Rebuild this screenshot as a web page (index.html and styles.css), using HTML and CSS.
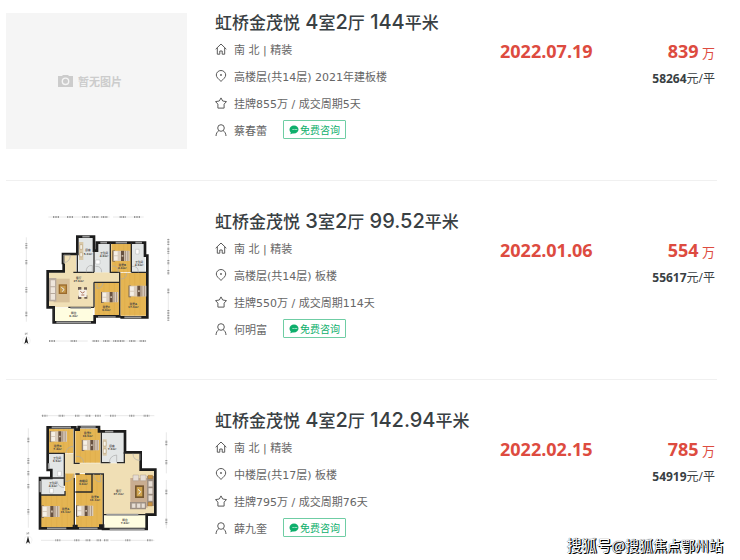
FILE: index.html
```html
<!DOCTYPE html>
<html lang="zh-CN">
<head>
  <meta charset="UTF-8">
  <meta name="viewport" content="width=device-width, initial-scale=1.0">
  <title>虹桥金茂悦 成交记录</title>
  <link rel="stylesheet" href="styles.css">
</head>
<body>
  <!-- Shared icons and furniture -->
  <svg class="sprite" width="0" height="0" aria-hidden="true">
    <symbol id="icon-home" viewBox="0 0 12 12">
      <path d="M.7 6.200 6 1l5.300 5.200M2.300 5v6.200h2.500V8h2.400v3.200h2.500V5"/>
    </symbol>
    <symbol id="icon-pin" viewBox="0 0 12 12">
      <path d="M6 11.400C3.500 9 1.300 7.300 1.300 5a4.700 4.500 0 0 1 9.400 0c0 2.300-2.200 4-4.700 6.400z"/>
      <circle cx="6" cy="5" r=".6"/>
    </symbol>
    <symbol id="icon-star" viewBox="0 0 12 12">
      <path d="M6 .9l1.700 3.100 3.800.6-2.400 2.500v4H2.900v-4L.5 4.600 4.300 4z"/>
    </symbol>
    <symbol id="icon-user" viewBox="0 0 12 12">
      <circle cx="6" cy="4" r="3.300"/>
      <path d="M1 12c.2-2.800 1.200-4.300 2.800-5.300M11 12c-.2-2.800-1.200-4.300-2.800-5.300"/>
    </symbol>
    <symbol id="icon-chat" viewBox="0 0 10 10">
      <path d="M5 .5C2.400.5.500 2.200.500 4.500c0 1.200.5 2.200 1.300 2.900L1.300 9.300l2.200-.9C7 9 9.500 7 9.500 4.500 9.500 2.200 7.600.500 5 .5z" fill="#0eaf6c"/>
      <path d="M3.500 4.500h1.200M5.500 4.500h1.200M7.300 4.500h.9" stroke="#fff" stroke-width=".8"/>
    </symbol>
    <symbol id="bed" viewBox="0 0 54 34">
      <path d="M0 0h8v34H0z" fill="#6d5b4c"/>
      <path d="M3 1h49v31H3z" fill="#d9cbbb"/>
      <path d="M5 3h11v12H5zM5 18h11v12H5z" fill="#f5efe6"/>
      <path d="M26 1h9v31h-9z" fill="#66503f"/>
      <path d="M37 1h4v31h-4zM45 1h3v31h-3z" fill="#ad9986"/>
      <path d="M28 14h5v5h-5z" fill="#c9b9a7"/>
    </symbol>
    <symbol id="compass" viewBox="0 0 28 40">
      <path d="M10 1v6l5-6v6" fill="none" stroke="#777" stroke-width="1.500"/>
      <circle cx="13" cy="25" r="12" fill="none" stroke="#ddd"/>
      <path d="M13 12l6 23-6-5-6 5z" fill="#222"/>
    </symbol>
  </svg>

  <main>
    <article class="deal">
      <a class="cover empty" href="#">
        <svg class="camera" viewBox="0 0 15 12" aria-hidden="true">
          <path d="M0 1h4l1-1h5l1 1h4v11H0z" fill="#ccc"/>
          <circle cx="7.500" cy="6.300" r="3.200" fill="none" stroke="#f5f5f5" stroke-width="1.400"/>
        </svg>
        <span>暂无图片</span>
      </a>
      <div class="info">
        <h2><a href="#">虹桥金茂悦<b> 4</b>室<b>2</b>厅<b> 144</b>平米</a></h2>
        <ul>
          <li><svg class="icon"><use href="#icon-home"/></svg>南 北 | 精装</li>
          <li><svg class="icon"><use href="#icon-pin"/></svg>高楼层(共14层) 2021年建板楼</li>
          <li><svg class="icon"><use href="#icon-star"/></svg>挂牌855万 / 成交周期5天</li>
          <li><svg class="icon"><use href="#icon-user"/></svg><a href="#">蔡春蕾</a><button type="button"><svg class="chat"><use href="#icon-chat"/></svg>免费咨询</button></li>
        </ul>
      </div>
      <time class="date" datetime="2022-07-19">2022.07.19</time>
      <div class="price">
        <p class="total"><strong>839</strong> 万</p>
        <p class="unit"><strong>58264</strong>元/平</p>
      </div>
    </article>

    <article class="deal">
      <a class="cover" href="#" aria-label="户型图">
        <svg class="plan" viewBox="-12 21 540 408">
          <!-- dimension lines -->
          <g class="dims">
            <path d="M112 36H296M306 36H398M46 97V350M472 100V210M472 250V348M114 408H230M242 408H406"/>
            <path class="ticks" d="M126 36H146M168 36H188M214 36H234M244 36H262M271 36H290M326 36H345M369 36H388M46 115V131M46 165V180M46 247V263M46 320V336M472 102V120M472 128V146M472 165V179M472 195V208M472 251V267M472 315V347M114 408H134M179 408H198M245 408H265M277 408H296M307 408H341M355 408H374M386 408H405"/>
          </g>
          <!-- floors -->
          <path d="M156 147H195V202H326V232H248V307H112V202H156z" fill="#f0dfb5"/>
          <path d="M202 97H246V202H202zM251 116H297V202H251zM362 116H403V202H362z" fill="#e3e6e6"/>
          <path d="M301 116H360V202H301zM328 204H407V332H328zM251 234H326V332H251z" fill="#e5b553"/>
          <path d="M131 309H246V349H131z" fill="#fffde0"/>
          <path class="boards" d="M312 116V202M324 116V202M338 116V202M350 116V202M341 204V332M356 204V332M371 204V332M387 204V332M264 234V332M279 234V332M295 234V332M310 234V332"/>
          <!-- walls -->
          <path class="wall" d="M156 178V147H199V95H249V137H258V113H301M301 113H402V152H409V337H328M328 334H251V352H128V307H110V199H158V176"/>
          <path class="thin" d="M199 145V202M187 202H249M249 137V202M298 113V202H326M361 113V202M326 202V334M249 232H326M249 232V307M172 307H249M361 202H407M128 309V350"/>
          <path class="window" d="M214 95H236M268 113H288M314 113H348M373 113H393M261 336H314M340 337H391M136 352H240M178 309H240"/>
          <path class="door" d="M158 173V150H178Q178 171 158 173M226 202Q224 181 244 181V202M253 184Q272 182 272 202M304 183Q322 182 322 202M330 222Q347 221 347 204M258 234V250Q274 250 276 234M363 184Q382 182 382 202"/>
          <!-- furniture -->
          <path d="M128 221H176V292H128z" fill="#d8c19a"/>
          <path d="M114 219H136V289H114z" fill="#b8aa9d"/>
          <path d="M119 226H132V244H119zM119 247H132V264H119zM119 267H132V284H119z" fill="#eee5db"/>
          <path d="M143 238H168V267H143z" fill="#9b6b2d"/>
          <path d="M147 242H164V263H147z" fill="#c69a4c"/>
          <path d="M151 247l8 6-5 7" fill="none" stroke="#eee" stroke-width="3"/>
          <path d="M201 246h10v9h-10zM219 247h9v9h-9zM201 272h10v10h-10zM220 271h9v10h-9z" fill="#6e5e53"/>
          <path d="M203 254H227V276H203z" fill="#f6f1e9"/>
          <path d="M208 259l6 5 7-4M211 270h9" fill="none" stroke="#a96f59" stroke-width="3"/>
          <path d="M204 111H217V165H204z" fill="#d9c8a8"/>
          <path d="M207 119h7v14h-7zM207 143h7v12h-7z" fill="#faf6ec" stroke="#9c7a48"/>
          <use href="#bed" x="303" y="136" width="56" height="34"/>
          <use href="#bed" x="268" y="260" width="58" height="34"/>
          <use href="#bed" x="352" y="236" width="56" height="46"/>
          <path d="M374 133h10v14h-10zM254 165h13v12h-13z" fill="#fff" stroke="#999"/>
          <g class="labels">
            <text x="231" y="139">厨房</text><text x="231" y="149">5.2m²</text>
            <text x="279" y="148">卫生间</text><text x="279" y="157">4.0m²</text>
            <text x="334" y="182">卧室B</text><text x="334" y="191">8.6m²</text>
            <text x="384" y="174">卫生间</text><text x="384" y="183">4.3m²</text>
            <text x="203" y="221">客厅</text><text x="203" y="230">27.6m²</text>
            <text x="286" y="309">卧室C</text><text x="286" y="318">9.9m²</text>
            <text x="367" y="301">卧室A</text><text x="367" y="310">17.3m²</text>
            <text x="188" y="326">阳台</text><text x="188" y="335">6.2m²</text>
          </g>
          <use href="#compass" x="33" y="382" width="28" height="40"/>
        </svg>
      </a>
      <div class="info">
        <h2><a href="#">虹桥金茂悦<b> 3</b>室<b>2</b>厅<b> 99.52</b>平米</a></h2>
        <ul>
          <li><svg class="icon"><use href="#icon-home"/></svg>南 北 | 精装</li>
          <li><svg class="icon"><use href="#icon-pin"/></svg>高楼层(共14层) 板楼</li>
          <li><svg class="icon"><use href="#icon-star"/></svg>挂牌550万 / 成交周期114天</li>
          <li><svg class="icon"><use href="#icon-user"/></svg><a href="#">何明富</a><button type="button"><svg class="chat"><use href="#icon-chat"/></svg>免费咨询</button></li>
        </ul>
      </div>
      <time class="date" datetime="2022-01-06">2022.01.06</time>
      <div class="price">
        <p class="total"><strong>554</strong> 万</p>
        <p class="unit"><strong>55617</strong>元/平</p>
      </div>
    </article>

    <article class="deal">
      <a class="cover" href="#" aria-label="户型图">
        <svg class="plan" viewBox="-12 18 540 408">
          <!-- dimension lines -->
          <g class="dims">
            <path d="M90 32H270M281 32H430M52 70V368M466 82V205M466 225V370M90 406H286M298 406H430"/>
            <path class="ticks" d="M93 32H109M143 32H160M192 32H207M224 32H240M252 32H269M297 32H314M355 32H371M398 32H415M52 98V114M52 160V177M52 198V212M52 237V252M52 312V328M466 107V123M466 165V180M466 254V270M466 341V358M133 406H149M190 406H206M224 406H240M257 406H272M279 406H294M343 406H359M408 406H424"/>
          </g>
          <!-- floors -->
          <path d="M112 71H187V145H112zM193 71H268V173H193zM162 205H191V367H90V270H162zM195 207H275V367H195z" fill="#e5b553"/>
          <path d="M112 147H158V217H120V195H112zM90 219H160V269H90zM273 81H339V173H273z" fill="#e3e6e6"/>
          <path d="M160 147H188V175H340V145H387V194H431V327H278V205H160z" fill="#f0dfb5"/>
          <path d="M280 330H406V370H280z" fill="#fffde0"/>
          <path class="boards" d="M127 71V145M143 71V145M158 71V145M173 71V145M208 71V173M223 71V173M238 71V173M253 71V173M105 270V367M121 270V367M137 270V367M153 270V367M169 207V367M180 207V367M210 207V367M226 207V367M242 207V367M258 207V367"/>
          <!-- walls -->
          <path class="wall" d="M110 170V67H193V74H203V66H264V79H342V142H389V194H433V329H407V372H276V362H268V370H196V363H189V370H87V219H121V195H110V170"/>
          <path class="thin" d="M190 71V175H206M271 81V173H298M318 173H340V142M112 145H160V219H87M160 219V242M90 270H162V258M190 219V367M193 207H206M222 207H277V370M193 261H243V207M277 329H407M340 150V173"/>
          <path class="window" d="M122 67H180M209 66H254M282 80H307M113 175V192M108 370H166M204 370H260M286 329H382M296 373H401M88 228V262"/>
          <path class="door" d="M366 146Q366 166 387 166V146M165 145Q165 126 187 124M195 154Q215 152 218 173M295 173Q296 152 317 150V173M163 207V230Q187 229 188 207M248 207Q249 230 269 231V207M139 229Q140 246 160 248"/>
          <!-- furniture -->
          <path d="M358 219H410V308H358z" fill="#c9ad91"/>
          <path d="M408 213H429V303H408zM357 291H405V313H357z" fill="#9f9185"/>
          <path d="M412 228h13v17h-13zM412 249h13v18h-13zM412 271h13v17h-13zM362 295h12v14h-12zM377 295h12v14h-12zM391 295h11v14h-11zM366 210h17v17h-17zM388 210h17v17h-17z" fill="#e7ded5" stroke="#918277"/>
          <path d="M372 241H399V279H372z" fill="#76572e"/>
          <path d="M377 246H394V274H377z" fill="#d0a44e"/>
          <path d="M381 253l8 7-6 8" fill="none" stroke="#eee" stroke-width="3"/>
          <path d="M411 211h14v10h-14zM411 292h13v11h-13z" fill="#c89242" stroke="#8c6338"/>
          <path d="M275 103H287V152H275z" fill="#d9c8a8"/>
          <path d="M277 109h8v14h-8zM277 132h8v13h-8z" fill="#faf6ec" stroke="#9c7a48"/>
          <use href="#bed" x="115" y="78" width="56" height="34"/>
          <use href="#bed" x="211" y="104" width="56" height="34"/>
          <use href="#bed" x="90" y="297" width="58" height="46"/>
          <use href="#bed" x="195" y="294" width="54" height="48"/>
          <path d="M140 199h11v14h-11zM116 250h11v14h-11z" fill="#fff" stroke="#999"/>
          <g class="labels">
            <text x="140" y="126">卧室D</text><text x="140" y="135">7.8m²</text>
            <text x="230" y="88">卧室C</text><text x="230" y="97">10.3m²</text>
            <text x="303" y="126">厨房</text><text x="303" y="135">7.3m²</text>
            <text x="138" y="163">卫生间</text><text x="138" y="172">3.5m²</text>
            <text x="126" y="237">卫生间</text><text x="126" y="246">4.6m²</text>
            <text x="217" y="232">衣帽间</text><text x="217" y="241">3.6m²</text>
            <text x="252" y="278">卧室B</text><text x="252" y="287">13.1m²</text>
            <text x="164" y="314">卧室A</text><text x="164" y="324">15.1m²</text>
            <text x="323" y="261">客厅</text><text x="323" y="271">37.2m²</text>
            <text x="342" y="348">阳台</text><text x="342" y="358">7.6m²</text>
          </g>
          <use href="#compass" x="38" y="381" width="28" height="40"/>
        </svg>
      </a>
      <div class="info">
        <h2><a href="#">虹桥金茂悦<b> 4</b>室<b>2</b>厅<b> 142.94</b>平米</a></h2>
        <ul>
          <li><svg class="icon"><use href="#icon-home"/></svg>南 北 | 精装</li>
          <li><svg class="icon"><use href="#icon-pin"/></svg>中楼层(共17层) 板楼</li>
          <li><svg class="icon"><use href="#icon-star"/></svg>挂牌795万 / 成交周期76天</li>
          <li><svg class="icon"><use href="#icon-user"/></svg><a href="#">薛九奎</a><button type="button"><svg class="chat"><use href="#icon-chat"/></svg>免费咨询</button></li>
        </ul>
      </div>
      <time class="date" datetime="2022-02-15">2022.02.15</time>
      <div class="price">
        <p class="total"><strong>785</strong> 万</p>
        <p class="unit"><strong>54919</strong>元/平</p>
      </div>
    </article>
  </main>

  <div class="watermark"><span>搜狐号</span>@搜狐焦点鄂州站</div>
</body>
</html>
```
FILE: styles.css
```css
:root {
  --title-color: #394043;
  --text-color: #666;
  --red: #dd4b40;
  --green: #0eaf6c;
}

* {
  margin: 0;
  padding: 0;
  box-sizing: border-box;
}

body {
  font-family: "DejaVu Sans", "Noto Sans CJK SC", sans-serif;
  font-size: 11px;
  color: var(--text-color);
  background: #fff;
  min-height: 100vh;
  position: relative;
}

a {
  color: inherit;
  text-decoration: none;
}

.sprite {
  position: absolute;
}

main {
  padding: 0 23px 0 6px;
}

/* one sold home per row */
.deal {
  display: grid;
  grid-template-columns: 181px 1fr 101px 116px;
  padding: 31px 0;
  border-bottom: 1px solid #f0f0f0;
}

.deal:first-child {
  padding-top: 13px;
}

.deal:last-child {
  padding-bottom: 12px;
  border-bottom: 0;
}

.cover {
  display: flex;
  align-items: center;
  justify-content: center;
  gap: 5px;
  height: 136px;
}

.empty {
  padding-right: 13px;
  background: #f5f5f5;
  color: #ccc;
  font-weight: 700;
}

.camera {
  width: 15px;
  height: 12px;
}

.info {
  padding-left: 28px;
}

h2 {
  font-family: Inter, "Noto Sans CJK SC", sans-serif;
  font-size: 17px;
  font-weight: 500;
  line-height: 18px;
  color: var(--title-color);
  white-space: nowrap;
}

h2 b {
  font-size: 20px;
  font-weight: 500;
  line-height: 18px;
}

ul {
  list-style: none;
  padding-top: 3px;
}

li {
  display: flex;
  align-items: center;
  height: 27px;
  white-space: nowrap;
}

.icon {
  width: 12px;
  height: 12px;
  margin-right: 7px;
  fill: none;
  stroke: #5a5a5a;
}

button {
  display: flex;
  align-items: center;
  gap: 1px;
  height: 19px;
  margin-left: 16px;
  padding: 0 5px;
  font-family: inherit;
  font-size: 10px;
  color: var(--green);
  background: #fff;
  border: 1px solid #6fcda4;
  border-radius: 1px;
}

.chat {
  width: 10px;
  height: 10px;
}

.date,
.price {
  padding-top: 26px;
  font-family: "Open Sans", "Noto Sans CJK SC", sans-serif;
  line-height: 24px;
  white-space: nowrap;
}

.date {
  font-size: 18px;
  font-weight: 700;
  color: var(--red);
}

.price {
  padding-right: 2px;
  text-align: right;
}

.total {
  font-size: 13px;
  color: var(--red);
}

.total strong {
  font-size: 18px;
}

.unit {
  font-size: 12px;
  line-height: 28px;
  color: var(--title-color);
}

/* floor plans */
.plan {
  width: 180px;
  height: 136px;
}

.dims path {
  fill: none;
  stroke: #ddd;
  stroke-width: 2;
}

.dims .ticks {
  stroke: #999;
  stroke-width: 6;
  stroke-dasharray: 3 2;
}

.wall,
.thin,
.window,
.door,
.boards {
  fill: none;
}

.wall {
  stroke: #1c1c1c;
  stroke-width: 8;
}

.thin {
  stroke: #292929;
  stroke-width: 4;
}

.window {
  stroke: #999;
  stroke-width: 5;
}

.door {
  stroke: #aaa;
  stroke-width: 2;
}

.boards {
  stroke: #d5a444;
}

.labels {
  font-size: 8px;
  font-weight: 700;
  fill: #444;
  text-anchor: middle;
}

/* stamp over the bottom corner */
.watermark {
  position: absolute;
  right: 17px;
  bottom: 5px;
  font-family: "Noto Sans CJK SC", sans-serif;
  font-size: 14px;
  line-height: 20px;
  color: #fff;
  text-shadow: 1px 0 0 #000, 1px 1px 0 #000, 0 0 1px #000;
}

.watermark span {
  font-size: 15px;
}
```
